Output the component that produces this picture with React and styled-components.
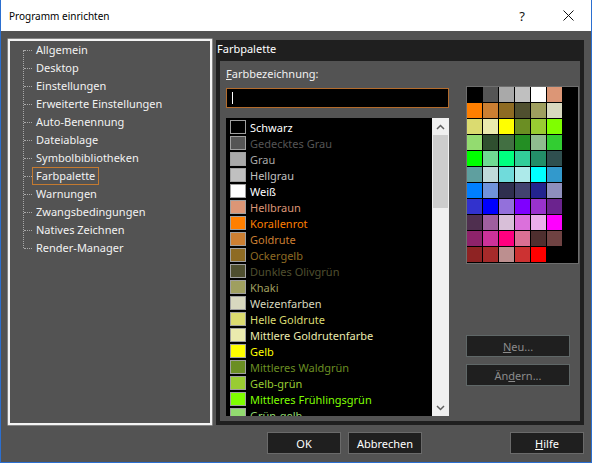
import React from "react";
import styled, { createGlobalStyle } from "styled-components";

const Global = createGlobalStyle`
  html, body { margin: 0; padding: 0; background: #ffffff; }
  body { width: 592px; height: 463px; overflow: hidden; font-family: "Noto Sans", "Open Sans", sans-serif; font-size: 11px; }
  * { box-sizing: border-box; }
`;

const Window = styled.div`
  width: 592px;
  height: 463px;
  display: flex;
  flex-direction: column;
  border: 1px solid #2b6fd0;
  border-top: none;
  background: #535353;
`;

const TitleBar = styled.div`
  height: 31px;
  flex: none;
  background: #ffffff;
  display: flex;
  align-items: center;
  padding-left: 8px;
  color: #000;
  font-size: 10px;
`;

const Title = styled.span`
  flex: 1;
`;

const TitleButton = styled.div`
  width: 46px;
  height: 31px;
  display: flex;
  align-items: center;
  justify-content: center;
  color: #111;
  font-size: 13px;
`;

const Body = styled.div`
  flex: 1;
  display: flex;
  flex-direction: column;
  padding: 8px 7px 8px 7px;
`;

const Main = styled.div`
  display: flex;
  gap: 4px;
  height: 386px;
`;

const TreePanel = styled.div`
  width: 204px;
  border: 2px solid #f4f4f4;
  box-shadow: 0 0 0 0.5px #b8b8b8;
  background: #535353;
`;

const TreeList = styled.ul`
  position: relative;
  list-style: none;
  margin: 0;
  padding: 0;
  &::before {
    content: "";
    position: absolute;
    left: 13px;
    top: 9px;
    bottom: 9px;
    border-left: 1px dotted #a8a8a8;
  }
`;

const TreeItem = styled.li`
  position: relative;
  height: 18px;
  display: flex;
  align-items: center;
  padding-left: 22px;
  &::before {
    content: "";
    position: absolute;
    left: 14px;
    top: 9px;
    width: 8px;
    border-top: 1px dotted #a8a8a8;
  }
`;

const TreeLabel = styled.span`
  display: inline-block;
  height: 18px;
  line-height: 16px;
  padding: 0 3px;
  border: 1px solid ${(p) => (p.$focused ? "#c47a30" : "transparent")};
  color: #f2f2f2;
  white-space: nowrap;
`;

const Page = styled.div`
  flex: 1;
  background: #1f1f1f;
  display: flex;
  flex-direction: column;
  margin-top: 1px;
`;

const PageHeader = styled.div`
  height: 22px;
  line-height: 18px;
  padding-left: 1px;
  color: #ffffff;
`;

const PageInner = styled.div`
  flex: 1;
  margin: 0 4px 4px;
  background: #535353;
  display: flex;
  padding: 4px 0 5px 6px;
`;

const LeftCol = styled.div`
  width: 223px;
  display: flex;
  flex-direction: column;
`;

const Label = styled.div`
  height: 18px;
  line-height: 18px;
  color: #f0f0f0;
`;

const NameInput = styled.div`
  margin-top: 5px;
  height: 20px;
  border: 1px solid #b36b2c;
  background: #000;
  display: flex;
  align-items: center;
  padding-left: 5px;
`;

const Caret = styled.span`
  width: 1px;
  height: 12px;
  background: #fff;
`;

const ListBox = styled.div`
  margin-top: 10px;
  height: 298px;
  background: #000;
  display: flex;
`;

const Rows = styled.div`
  flex: 1;
  overflow: hidden;
  padding-top: 1px;
`;

const Row = styled.div`
  height: 16px;
  display: flex;
  align-items: center;
  padding-left: 4px;
  white-space: nowrap;
  color: ${(p) => p.$text};
`;

const Swatch = styled.span`
  width: 16px;
  height: 14px;
  flex: none;
  border: 1px solid #a0a0a0;
  background: ${(p) => p.$color};
  margin-right: 4px;
`;

const Scrollbar = styled.div`
  width: 17px;
  background: #f0f0f0;
  display: flex;
  flex-direction: column;
`;

const ScrollArrow = styled.div`
  height: 17px;
  display: flex;
  align-items: center;
  justify-content: center;
`;

const ScrollTrack = styled.div`
  flex: 1;
  padding: 0 1px;
`;

const Thumb = styled.div`
  height: 73px;
  background: #cdcdcd;
`;

const RightCol = styled.div`
  margin-left: 17px;
  padding-top: 21px;
  display: flex;
  flex-direction: column;
`;

const Grid = styled.div`
  width: 113px;
  height: 178px;
  border: 1px solid #6e6e6e;
  background: #000;
  display: grid;
  grid-template-columns: repeat(6, 15px);
  grid-auto-rows: 15px;
  gap: 1px;
  align-content: start;
`;

const Cell = styled.div`
  background: ${(p) => p.$color};
`;

const SideButtons = styled.div`
  margin-top: 71px;
  display: flex;
  flex-direction: column;
  gap: 7px;
`;

const Button = styled.div`
  width: ${(p) => p.$w || 74}px;
  height: 22px;
  background: #1f1f1f;
  border: 1px solid ${(p) => (p.$disabled ? "#5f6767" : "#6a6a6a")};
  color: ${(p) => (p.$disabled ? "#8c8c8c" : "#ffffff")};
  display: flex;
  align-items: center;
  justify-content: center;
`;

const Footer = styled.div`
  margin-top: 7px;
  display: flex;
  justify-content: flex-end;
  gap: 7px;
`;

const Spacer = styled.div`
  width: 74px;
`;

const palette = [
  "#000000", "#555555", "#a9a9a9", "#c0c0c0", "#ffffff", "#dc9676",
  "#ff7f00", "#cc7f32", "#8e6b23", "#4f4f2f", "#9f9f5f", "#d8d8bf",
  "#dbdb70", "#eaeaae", "#ffff00", "#6b8e23", "#99cc32", "#7fff00",
  "#93db70", "#2f4f2f", "#426f42", "#238e23", "#8fbc8f", "#32cd32",
  "#00ff00", "#70db93", "#00ff7f", "#32cd99", "#238e68", "#2f4f4f",
  "#5f9f9f", "#c0d9d9", "#70dbdb", "#adeaea", "#00ffff", "#3299cc",
  "#007fff", "#7093db", "#2f2f4f", "#42426f", "#23238e", "#8f8fbd",
  "#3232cd", "#0000ff", "#9370db", "#7f00ff", "#9932cd", "#6b238e",
  "#4f2f4f", "#9f5f9f", "#d8bfd8", "#db70db", "#eaadea", "#ff00ff",
  "#8e236b", "#cc3299", "#ff007f", "#db7093", "#4f2f2f", "#6f4242",
  "#8e2323", "#a62a2a", "#bc8f8f", "#cc3232", "#ff0000",
];

const names = [
  "Schwarz", "Gedecktes Grau", "Grau", "Hellgrau", "Weiß", "Hellbraun",
  "Korallenrot", "Goldrute", "Ockergelb", "Dunkles Olivgrün", "Khaki",
  "Weizenfarben", "Helle Goldrute", "Mittlere Goldrutenfarbe", "Gelb",
  "Mittleres Waldgrün", "Gelb-grün", "Mittleres Frühlingsgrün", "Grün-gelb",
];

const tree = [
  "Allgemein", "Desktop", "Einstellungen", "Erweiterte Einstellungen",
  "Auto-Benennung", "Dateiablage", "Symbolbibliotheken", "Farbpalette",
  "Warnungen", "Zwangsbedingungen", "Natives Zeichnen", "Render-Manager",
];

const Chevron = ({ down }) => (
  <svg width="9" height="6" viewBox="0 0 9 6">
    <path
      d={down ? "M1 1 L4.5 4.5 L8 1" : "M1 5 L4.5 1.5 L8 5"}
      fill="none"
      stroke="#606060"
      strokeWidth="1.5"
    />
  </svg>
);

const CloseIcon = () => (
  <svg width="11" height="11" viewBox="0 0 11 11">
    <path d="M0.5 0.5 L10.5 10.5 M10.5 0.5 L0.5 10.5" stroke="#111" strokeWidth="1" />
  </svg>
);

export default function App() {
  return (
    <>
      <Global />
      <Window>
        <TitleBar>
          <Title>Programm einrichten</Title>
          <TitleButton>?</TitleButton>
          <TitleButton>
            <CloseIcon />
          </TitleButton>
        </TitleBar>
        <Body>
          <Main>
            <TreePanel>
              <TreeList>
                {tree.map((t) => (
                  <TreeItem key={t}>
                    <TreeLabel $focused={t === "Farbpalette"}>{t}</TreeLabel>
                  </TreeItem>
                ))}
              </TreeList>
            </TreePanel>
            <Page>
              <PageHeader>Farbpalette</PageHeader>
              <PageInner>
                <LeftCol>
                  <Label>
                    <u>F</u>arbbezeichnung:
                  </Label>
                  <NameInput>
                    <Caret />
                  </NameInput>
                  <ListBox>
                    <Rows>
                      {names.map((n, i) => (
                        <Row key={n} $text={i === 0 ? "#ffffff" : palette[i]}>
                          <Swatch $color={palette[i]} />
                          {n}
                        </Row>
                      ))}
                    </Rows>
                    <Scrollbar>
                      <ScrollArrow>
                        <Chevron />
                      </ScrollArrow>
                      <ScrollTrack>
                        <Thumb />
                      </ScrollTrack>
                      <ScrollArrow>
                        <Chevron down />
                      </ScrollArrow>
                    </Scrollbar>
                  </ListBox>
                </LeftCol>
                <RightCol>
                  <Grid>
                    {palette.map((c, i) => (
                      <Cell key={i} $color={c} />
                    ))}
                  </Grid>
                  <SideButtons>
                    <Button $w={104} $disabled>
                      <u>N</u>eu...
                    </Button>
                    <Button $w={104} $disabled>
                      Än<u>d</u>ern...
                    </Button>
                  </SideButtons>
                </RightCol>
              </PageInner>
            </Page>
          </Main>
          <Footer>
            <Button>OK</Button>
            <Button>Abbrechen</Button>
            <Spacer />
            <Button>
              <u>H</u>ilfe
            </Button>
          </Footer>
        </Body>
      </Window>
    </>
  );
}
